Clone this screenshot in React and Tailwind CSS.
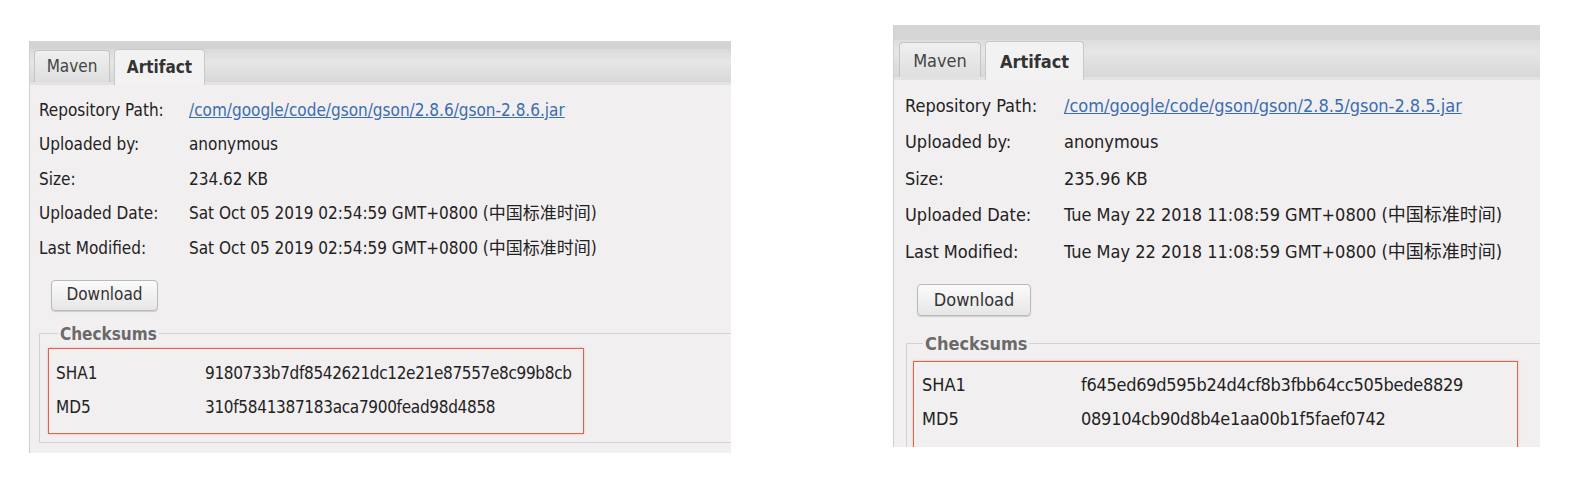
import React from "react";

const left = {
  rows: [
    ["Repository Path:", "/com/google/code/gson/gson/2.8.6/gson-2.8.6.jar", true],
    ["Uploaded by:", "anonymous"],
    ["Size:", "234.62 KB"],
    ["Uploaded Date:", "Sat Oct 05 2019 02:54:59 GMT+0800 (中国标准时间)"],
    ["Last Modified:", "Sat Oct 05 2019 02:54:59 GMT+0800 (中国标准时间)"],
  ],
  sha1: "9180733b7df8542621dc12e21e87557e8c99b8cb",
  md5: "310f5841387183aca7900fead98d4858",
};

const right = {
  rows: [
    ["Repository Path:", "/com/google/code/gson/gson/2.8.5/gson-2.8.5.jar", true],
    ["Uploaded by:", "anonymous"],
    ["Size:", "235.96 KB"],
    ["Uploaded Date:", "Tue May 22 2018 11:08:59 GMT+0800 (中国标准时间)"],
    ["Last Modified:", "Tue May 22 2018 11:08:59 GMT+0800 (中国标准时间)"],
  ],
  sha1: "f645ed69d595b24d4cf8b3fbb64cc505bede8829",
  md5: "089104cb90d8b4e1aa00b1f5faef0742",
};

const font = {
  fontFamily: '"DejaVu Sans", "Noto Sans CJK SC", sans-serif',
  fontStretch: "condensed",
};

function LeftPanel() {
  const d = left;
  return (
    <div
      className="ml-[29px] mt-[41px] w-[702px] h-[412px] flex flex-col bg-[#f2eff0] border-l border-[#cfcfcf] overflow-hidden text-[17px] text-[#222]"
      style={font}
    >
      <div className="h-[44px] shrink-0 flex flex-col bg-gradient-to-b from-[#d2d2d2] via-[#e6e6e6] to-[#d8d8d8] border-b-[3px] border-[#e3e3e3]">
        <div className="h-[8px] bg-[#d3d3d3]" />
        <div className="flex items-end gap-[4px] pl-[4px] h-[33px]">
          <div className="w-[76px] h-[32px] flex items-center justify-center rounded-t-[4px] border border-b-0 border-[#c4c4c4] bg-gradient-to-b from-[#f0f0f0] to-[#dedede] text-[#444]">
            Maven
          </div>
          <div className="w-[91px] h-[36px] -mb-[3px] flex items-center justify-center rounded-t-[4px] border border-b-0 border-[#c8c8c8] bg-[#f3f2f2] font-bold text-[#333]">
            Artifact
          </div>
        </div>
      </div>
      <div className="pt-[8px] pl-[9px] flex flex-col">
        {d.rows.map(([k, v, link]) => (
          <div key={k} className="h-[34.5px] flex items-center whitespace-nowrap">
            <div className="w-[150px] shrink-0">{k}</div>
            <div className={link ? "text-[#3b6db3] underline" : ""}>{v}</div>
          </div>
        ))}
      </div>
      <div className="pl-[21px] mt-[14px]">
        <button
          className="w-[107px] h-[31px] rounded-[4px] border border-[#b9b9b9] bg-gradient-to-b from-[#fbfbfb] to-[#e6e6e6] shadow-[0_1px_1px_rgba(0,0,0,0.15)] text-[#333] text-[17px]"
          style={font}
        >
          Download
        </button>
      </div>
      <fieldset className="ml-[9px] mt-[14px] border border-r-0 border-[#d2d2d2] pb-[8px] pl-[8px]">
        <legend className="ml-[10px] px-[2px] font-bold text-[#6a6a6a] leading-[18px]">Checksums</legend>
        <div className="mt-[5px] w-[536px] h-[86px] border border-[#e0644a] shadow-[0_0_2px_rgba(240,120,90,0.5)] flex flex-col pt-[8px] pl-[7px] whitespace-nowrap">
          <div className="h-[34px] flex items-center">
            <div className="w-[149px]">SHA1</div>
            <div className="tracking-[-0.33px]">{d.sha1}</div>
          </div>
          <div className="h-[35px] flex items-center">
            <div className="w-[149px]">MD5</div>
            <div className="tracking-[-0.3px]">{d.md5}</div>
          </div>
        </div>
      </fieldset>
    </div>
  );
}

function RightPanel() {
  const d = right;
  return (
    <div
      className="ml-[162px] mt-[25px] w-[647px] h-[422px] flex flex-col bg-[#f2eff0] border-l border-[#cfcfcf] overflow-hidden text-[18px] text-[#222] relative"
      style={font}
    >
      <div className="absolute left-[-4px] top-[250px] w-[4px] h-[50px] bg-[#888] rounded-r" />
      <div className="h-[55px] shrink-0 flex flex-col bg-gradient-to-b from-[#d2d2d2] via-[#e6e6e6] to-[#d8d8d8] border-b-[3px] border-[#e3e3e3]">
        <div className="h-[15px] bg-[#d5d5d5]" />
        <div className="flex items-end gap-[4px] pl-[5px] h-[37px]">
          <div className="w-[82px] h-[35px] flex items-center justify-center rounded-t-[4px] border border-b-0 border-[#c4c4c4] bg-gradient-to-b from-[#f0f0f0] to-[#dedede] text-[#444]">
            Maven
          </div>
          <div className="w-[99px] h-[39px] -mb-[3px] flex items-center justify-center rounded-t-[4px] border border-b-0 border-[#c8c8c8] bg-[#f3f2f2] font-bold text-[#333]">
            Artifact
          </div>
        </div>
      </div>
      <div className="pt-[7px] pl-[11px] flex flex-col">
        {d.rows.map(([k, v, link]) => (
          <div key={k} className="h-[36.5px] flex items-center whitespace-nowrap">
            <div className="w-[159px] shrink-0">{k}</div>
            <div className={link ? "text-[#3b6db3] underline" : ""}>{v}</div>
          </div>
        ))}
      </div>
      <div className="pl-[23px] mt-[14px]">
        <button
          className="w-[114px] h-[32px] rounded-[4px] border border-[#b9b9b9] bg-gradient-to-b from-[#fbfbfb] to-[#e6e6e6] shadow-[0_1px_1px_rgba(0,0,0,0.15)] text-[#333] text-[18px]"
          style={font}
        >
          Download
        </button>
      </div>
      <fieldset className="ml-[12px] mt-[18px] border border-r-0 border-[#d2d2d2] pl-[6px]">
        <legend className="ml-[10px] px-[2px] font-bold text-[#6a6a6a] leading-[20px]">Checksums</legend>
        <div className="mt-[7px] w-[605px] h-[90px] border border-[#e0644a] shadow-[0_0_2px_rgba(240,120,90,0.5)] flex flex-col pt-[6px] pl-[8px] whitespace-nowrap">
          <div className="h-[34px] flex items-center">
            <div className="w-[159px]">SHA1</div>
            <div className="tracking-[-0.27px]">{d.sha1}</div>
          </div>
          <div className="h-[34px] flex items-center">
            <div className="w-[159px]">MD5</div>
            <div className="tracking-[-0.25px]">{d.md5}</div>
          </div>
        </div>
      </fieldset>
    </div>
  );
}

export default function App() {
  return (
    <div className="w-[1591px] h-[503px] bg-white flex items-start overflow-hidden">
      <LeftPanel />
      <RightPanel />
    </div>
  );
}
